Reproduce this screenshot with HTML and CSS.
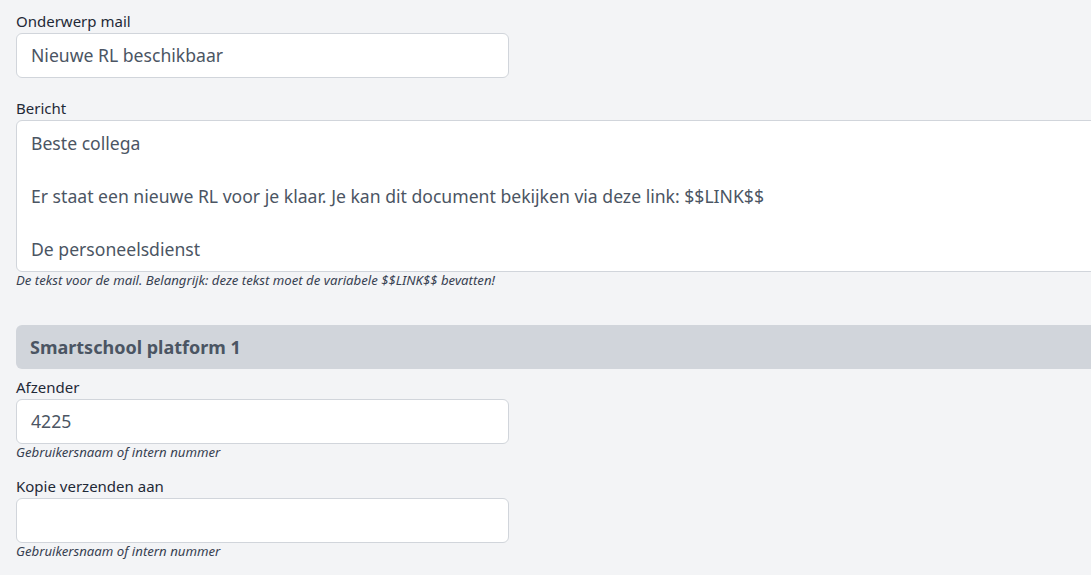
FILE: index.html
```html
<!DOCTYPE html>
<html lang="nl">
<head>
<meta charset="utf-8">
<title>Mail instellingen</title>
<link rel="stylesheet" href="styles.css">
</head>
<body>
<div class="page">
  <div class="group">
    <label class="label">Onderwerp mail</label>
    <div class="input">Nieuwe RL beschikbaar</div>
  </div>
  <div class="group">
    <label class="label">Bericht</label>
    <div class="textarea">
      <div class="line">Beste collega</div>
      <div class="line">&nbsp;</div>
      <div class="line">Er staat een nieuwe RL voor je klaar. Je kan dit document bekijken via deze link: $$LINK$$</div>
      <div class="line">&nbsp;</div>
      <div class="line">De personeelsdienst</div>
    </div>
    <div class="help">De tekst voor de mail. Belangrijk: deze tekst moet de variabele $$LINK$$ bevatten!</div>
  </div>
  <div class="section">Smartschool platform 1</div>
  <div class="group tight">
    <label class="label">Afzender</label>
    <div class="input">4225</div>
    <div class="help">Gebruikersnaam of intern nummer</div>
  </div>
  <div class="group tight">
    <label class="label">Kopie verzenden aan</label>
    <div class="input"></div>
    <div class="help">Gebruikersnaam of intern nummer</div>
  </div>
</div>
</body>
</html>
```
FILE: styles.css
```css
html, body {
  margin: 0;
  padding: 0;
  overflow: hidden;
  background: #f3f4f6;
}
body {
  font-family: "Noto Sans", "Open Sans", sans-serif;
  color: #1f2937;
}
.page {
  width: 1200px;
  padding: 10px 0 0 16px;
}
.group {
  display: flex;
  flex-direction: column;
  margin-bottom: 19px;
}
.group.tight {
  margin-bottom: 15px;
}
.label {
  font-size: 15px;
  line-height: 22px;
  margin-bottom: 1px;
  color: #1f2937;
}
.input {
  box-sizing: border-box;
  width: 493px;
  height: 45px;
  background: #fff;
  border: 1px solid #d1d5db;
  border-radius: 6px;
  padding: 0 14px;
  font-size: 17.6px;
  line-height: 43px;
  color: #4b5563;
}
.textarea {
  box-sizing: border-box;
  width: 1180px;
  height: 152px;
  background: #fff;
  border: 1px solid #d1d5db;
  border-radius: 6px;
  padding: 9px 14px;
  font-size: 17.6px;
  line-height: 26.5px;
  color: #4b5563;
}
.help {
  font-size: 13.2px;
  line-height: 16px;
  font-style: italic;
  color: #374151;
}
.section {
  box-sizing: border-box;
  width: 1180px;
  height: 44px;
  background: #d1d5db;
  border-radius: 6px;
  padding: 0 14px;
  font-size: 18px;
  font-weight: 700;
  line-height: 44px;
  color: #4b5563;
  margin-top: 37px;
  margin-bottom: 7px;
}
```
